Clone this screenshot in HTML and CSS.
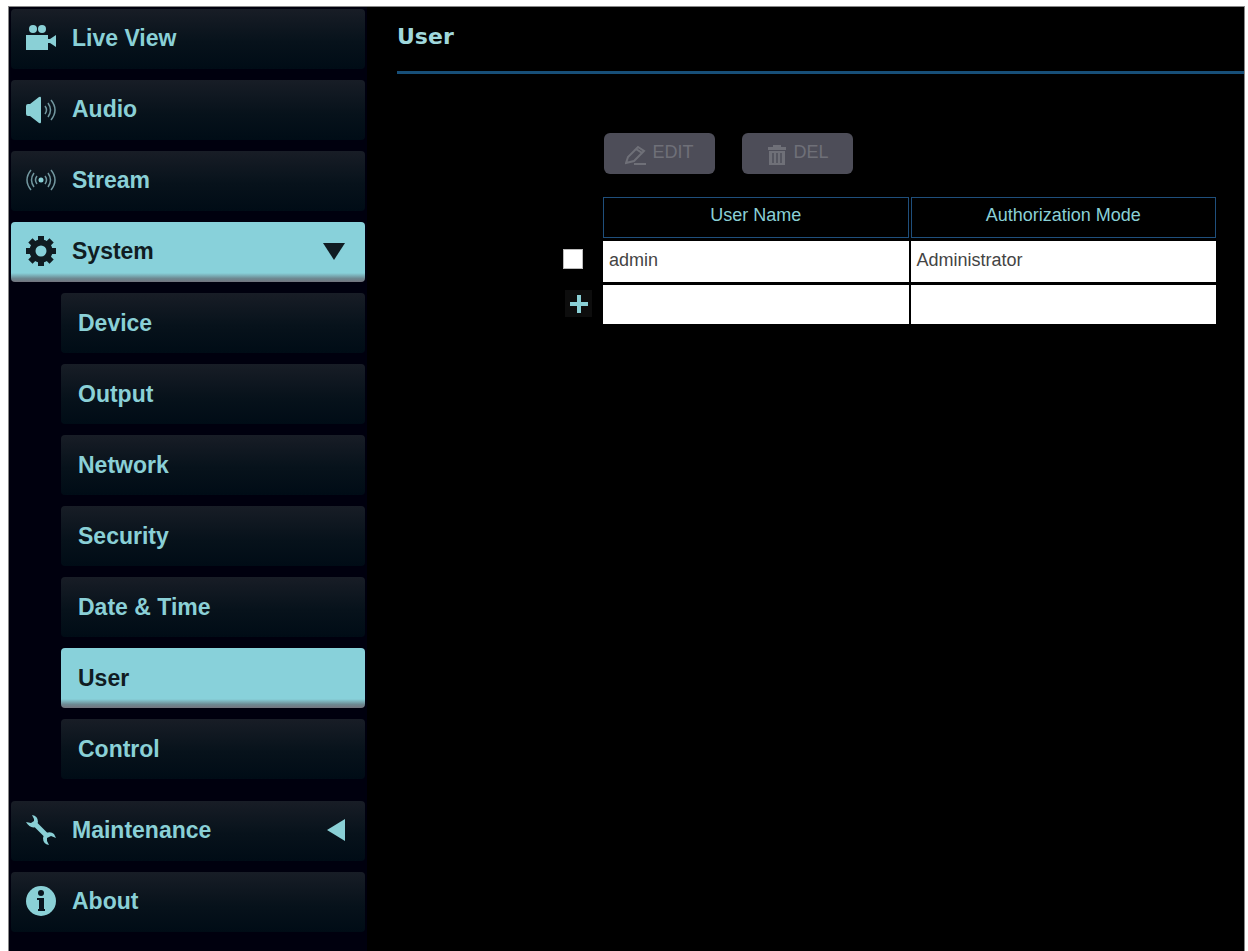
FILE: index.html
```html
<!DOCTYPE html>
<html lang="en">
<head>
  <meta charset="UTF-8" />
  <title>User</title>
  <link rel="stylesheet" href="styles.css">
</head>

<body>
  <div class="app">
    <nav class="sidebar">
      <a class="item" href="#live">
        <svg class="icon" viewBox="0 0 30 30">
          <circle cx="7" cy="6" r="4" /><circle cx="16" cy="6" r="4" />
          <path d="M0 12h22v4h2l6-4v12l-6-4h-2v7H0z" />
        </svg>
        Live View
      </a>
      <a class="item" href="#audio">
        <svg class="icon" viewBox="0 0 30 30">
          <path d="M0 12q0-2 2-2h2L13 3q2-1 2 1v24q0 2-2 1L4 22H2q-2 0-2-2z" />
          <path class="wave" d="M19 12q3 4 0 8M22 9q5 7 0 14M25 6q8 10 0 20" />
        </svg>
        Audio
      </a>
      <a class="item" href="#stream">
        <svg class="icon" viewBox="0 0 30 30">
          <circle cx="15" cy="15" r="2.5" />
          <path class="wave" d="M19 11q3 4 0 8M22 8q5 7 0 14M25 5q8 10 0 20M11 11q-3 4 0 8M8 8q-5 7 0 14M5 5q-8 10 0 20" />
        </svg>
        Stream
      </a>
      <button class="item active" type="button">
        <svg class="icon" viewBox="0 0 30 30">
          <circle class="gear-ring" cx="15" cy="15" r="8.5" />
          <path class="gear-teeth" d="M15 0v5M15 25v5M0 15h5M25 15h5M4.4 4.4l3.5 3.5M22.1 22.1l3.5 3.5M4.4 25.6l3.5-3.5M22.1 7.9l3.5-3.5" />
        </svg>
        System
        <svg class="arrow" viewBox="0 0 22 22"><path d="M0 3h22L11 20z" /></svg>
      </button>
      <div class="submenu">
        <a class="item" href="#device">Device</a>
        <a class="item" href="#output">Output</a>
        <a class="item" href="#network">Network</a>
        <a class="item" href="#security">Security</a>
        <a class="item" href="#date">Date &amp; Time</a>
        <a class="item active" href="#user">User</a>
        <a class="item" href="#control">Control</a>
      </div>
      <button class="item" type="button">
        <svg class="icon" viewBox="0 0 30 30">
          <path d="M6 0q6 1 6 7l-1 2 9 9q5-2 8 1l2 4-5-2-4 2v3l2 4q-6-1-6-7l1-3-8-8q-6 2-10-5l5 1 3-2V4z" />
          <path class="wrench" d="M9 9l12 12" />
        </svg>
        Maintenance
        <svg class="arrow" viewBox="0 0 22 22"><path d="M22 0v22L4 11z" /></svg>
      </button>
      <a class="item" href="#about">
        <svg class="icon" viewBox="0 0 30 30">
          <circle cx="15" cy="15" r="15" />
          <circle class="cut" cx="15" cy="7" r="3" />
          <path class="cut" d="M11 12h7v11h1v2h-7v-2h1v-9h-2z" />
        </svg>
        About
      </a>
    </nav>

    <main class="content">
      <h1>User</h1>

      <div class="panel">
        <div class="buttons">
          <button type="button" disabled>
            <svg class="btn-icon" viewBox="0 0 22 22">
              <path class="pencil" d="M1 19l2-6 8-8 6 4-8 8zM9 7l4-4 6 4-3 3M9 20h12" />
            </svg>
            EDIT
          </button>
          <button type="button" disabled>
            <svg class="btn-icon" viewBox="0 0 22 22">
              <path d="M2 3h5V1h8v2h5v3H2zM3 7h16v14H3z" />
              <path class="slots" d="M7 9v10M11 9v10M15 9v10" />
            </svg>
            DEL
          </button>
        </div>

        <table>
          <colgroup><col class="col-select"><col><col></colgroup>
          <thead>
            <tr><td></td><th>User Name</th><th>Authorization Mode</th></tr>
          </thead>
          <tbody>
            <tr>
              <td class="select"><input type="checkbox" aria-label="Select admin"></td>
              <td class="cell">admin</td>
              <td class="cell">Administrator</td>
            </tr>
            <tr class="new-row">
              <td class="select">
                <button class="add" type="button" aria-label="Add user">
                  <svg viewBox="0 0 18 18"><path d="M7 0h4v7h7v4h-7v7H7v-7H0V7h7z" /></svg>
                </button>
              </td>
              <td class="cell"></td>
              <td class="cell"></td>
            </tr>
          </tbody>
        </table>
      </div>
    </main>
  </div>
</body>
</html>
```

FILE: styles.css
```css
* {
  box-sizing: border-box;
}

body {
  margin: 0;
  padding: 6px 3px 0 8px;
  background: #fff;
  font-family: "Liberation Sans", Arial, sans-serif;
  font-size: 18px;
}

.app {
  display: flex;
  min-height: calc(100vh - 6px);
  background: #000;
  border: 1px solid #888;
  border-bottom: 0;
}

/* left menu */
.sidebar {
  display: flex;
  flex-direction: column;
  gap: 11px;
  width: 358px;
  flex-shrink: 0;
  padding: 2px 2px 18px;
  background: #00000e;
}

.item {
  display: flex;
  align-items: center;
  gap: 16px;
  width: 100%;
  height: 60px;
  padding: 0 20px 2px 15px;
  border: 0;
  border-radius: 4px;
  background: linear-gradient(#181d26, #07121b 55%, #000c16);
  color: #8ad0d6;
  font-family: inherit;
  font-size: 23px;
  font-weight: bold;
  line-height: 26px;
  text-align: left;
  text-decoration: none;
}

.item.active {
  background: linear-gradient(#88d1da, #88d1da 85%, #6d8992 94%, #73737d);
  color: #101c22;
}

.submenu {
  display: flex;
  flex-direction: column;
  gap: 11px;
  margin-bottom: 11px;
  padding-left: 50px;
}

.submenu .item {
  padding-left: 17px;
  padding-bottom: 0;
}

.icon {
  width: 30px;
  height: 30px;
  flex-shrink: 0;
  fill: currentColor;
}

.arrow {
  width: 22px;
  height: 22px;
  margin-left: auto;
  fill: currentColor;
}

.wave {
  fill: none;
  stroke: #71969e;
  stroke-width: 1.5;
}

.gear-ring,
.gear-teeth {
  fill: none;
  stroke: currentColor;
  stroke-width: 6;
}

.wrench {
  stroke: currentColor;
  stroke-width: 5;
}

.cut {
  fill: #09151e;
}

/* right side */
.content {
  flex: 1;
  padding-left: 30px;
}

h1 {
  margin: 0;
  padding: 16px 0 20px;
  border-bottom: 3px solid #174f78;
  color: #a0d8dc;
  font-family: "DejaVu Sans", Verdana, sans-serif;
  font-size: 22px;
  line-height: 28px;
}

.panel {
  padding: 59px 26px 0 162px;
}

.buttons {
  display: flex;
  gap: 27px;
  padding-left: 45px;
  margin-bottom: 20px;
}

.buttons button {
  display: flex;
  align-items: center;
  justify-content: center;
  gap: 5px;
  width: 111px;
  height: 41px;
  padding: 0 0 2px;
  border: 0;
  border-radius: 6px;
  background: #4d4d58;
  color: #6f7078;
  font: inherit;
}

.btn-icon {
  width: 22px;
  height: 22px;
  margin-top: 4px;
  fill: currentColor;
}

.pencil {
  fill: none;
  stroke: currentColor;
  stroke-width: 2;
}

.slots {
  stroke: #4d4d58;
  stroke-width: 1.5;
}

table {
  width: 100%;
  table-layout: fixed;
  border-spacing: 2px 3px;
}

.col-select {
  width: 40px;
}

th,
td {
  height: 41px;
  padding: 0;
}

th {
  padding-bottom: 4px;
  border: 1px solid #1f4f7c;
  color: #8ad0d6;
  font-weight: normal;
}

.cell {
  padding: 0 6px 3px;
  background: #fff;
  color: #444;
}

.new-row td {
  height: 39px;
}

.select input {
  display: block;
  appearance: none;
  width: 20px;
  height: 20px;
  margin: 0 0 5px 2px;
  border: 1px solid #bbb;
  background: #fff;
}

.add {
  display: flex;
  align-items: center;
  justify-content: center;
  width: 27px;
  height: 27px;
  margin: 0 0 2px 4px;
  padding: 0;
  border: 0;
  background: #0d0d0d;
}

.add svg {
  width: 18px;
  height: 18px;
  fill: #8ad0d6;
}
```
